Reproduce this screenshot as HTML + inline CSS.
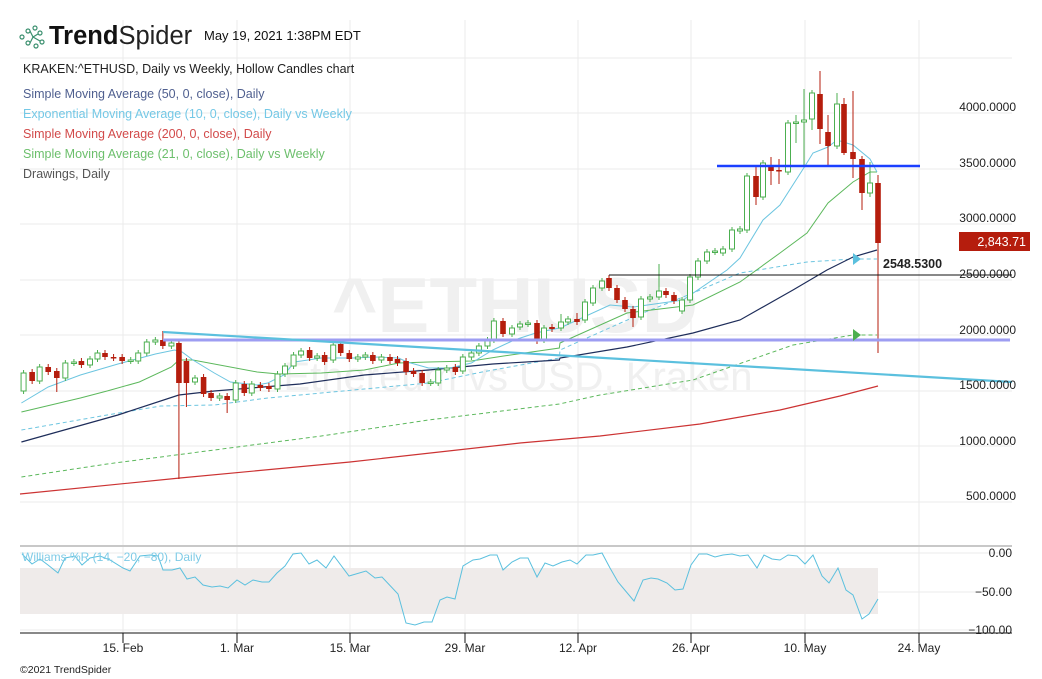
<!DOCTYPE html>
<html><head><meta charset="utf-8">
<style>
html,body{margin:0;padding:0;background:#fff;}
svg{display:block;font-family:"Liberation Sans",Arial,sans-serif;}
</style></head>
<body>
<svg id="s" width="1042" height="679" viewBox="0 0 1042 679" xmlns="http://www.w3.org/2000/svg">
<rect width="1042" height="679" fill="#fff"/>
<g id="grid" stroke="#ebebeb" stroke-width="1"></g>
<!-- watermark -->
<text x="515" y="332" font-size="78" font-weight="bold" fill="#f0f0f0" text-anchor="middle">^ETHUSD</text>
<text x="518" y="390" font-size="40" fill="#f0f0f0" text-anchor="middle">Ethereum vs USD, Kraken</text>
<!-- williams band -->
<rect x="20" y="568" width="858" height="46" fill="#efebea"/>
<g id="lines"></g>
<g id="candles"></g>
<g id="top"></g>

<!-- header -->
<g fill="none" stroke="#3a8f6e" stroke-width="1.2">
<circle cx="22" cy="37" r="2"/><circle cx="28" cy="31" r="2"/><circle cx="28" cy="43" r="2"/>
<circle cx="35" cy="28" r="2"/><circle cx="36" cy="46" r="2"/><circle cx="40" cy="33" r="2"/><circle cx="42" cy="42" r="2"/>
<path d="M30 31 L33 37 L30 43 M33 37 L38 34 M33 37 L40 41"/>
</g>
<text x="49" y="44" font-size="25.5" fill="#111"><tspan font-weight="bold">Trend</tspan><tspan fill="#222">Spider</tspan></text>
<text x="204" y="40" font-size="13" fill="#111">May 19, 2021 1:38PM EDT</text>
<text x="23" y="73" font-size="12.5" fill="#222">KRAKEN:^ETHUSD, Daily vs Weekly, Hollow Candles chart</text>
<text x="23" y="98" font-size="12.5" fill="#4f5f8f">Simple Moving Average (50, 0, close), Daily</text>
<text x="23" y="118" font-size="12.5" fill="#74c8e6">Exponential Moving Average (10, 0, close), Daily vs Weekly</text>
<text x="23" y="138" font-size="12.5" fill="#d24a4a">Simple Moving Average (200, 0, close), Daily</text>
<text x="23" y="158" font-size="12.5" fill="#6cbf6c">Simple Moving Average (21, 0, close), Daily vs Weekly</text>
<text x="23" y="178" font-size="12.5" fill="#555">Drawings, Daily</text>

<!-- axis labels -->
<g font-size="12" fill="#222" text-anchor="end">
<text x="1016" y="111">4000.0000</text>
<text x="1016" y="167">3500.0000</text>
<text x="1016" y="222">3000.0000</text>
<text x="1016" y="278">2500.0000</text>
<text x="1016" y="334">2000.0000</text>
<text x="1016" y="389">1500.0000</text>
<text x="1016" y="445">1000.0000</text>
<text x="1016" y="500">500.0000</text>
<text x="1012" y="557">0.00</text>
<text x="1012" y="596">−50.00</text>
<text x="1012" y="634">−100.00</text>
</g>
<rect x="959" y="232" width="71" height="19" fill="#b51d0d"/>
<text x="1026" y="246" font-size="12.5" fill="#fff" text-anchor="end">2,843.71</text>
<text x="883" y="268" font-size="12.5" font-weight="bold" fill="#222">2548.5300</text>
<text x="22" y="561" font-size="12" fill="#7fcbe6">Williams %R (14, −20, −80), Daily</text>
<g font-size="12" fill="#222" text-anchor="middle">
<text x="123" y="652">15. Feb</text><text x="237" y="652">1. Mar</text><text x="350" y="652">15. Mar</text>
<text x="465" y="652">29. Mar</text><text x="578" y="652">12. Apr</text><text x="691" y="652">26. Apr</text>
<text x="805" y="652">10. May</text><text x="919" y="652">24. May</text>
</g>
<text x="20" y="673" font-size="10.5" fill="#222">©2021 TrendSpider</text>
</svg>
<script>
var NS="http://www.w3.org/2000/svg";
function el(p,t,a){var e=document.createElementNS(NS,t);for(var k in a)e.setAttribute(k,a[k]);document.getElementById(p).appendChild(e);return e;}
var K=1.0714;
function sc(a){return a.map(function(p){return [p[0]*K,p[1]];});}
function path(p,pts,st){var d="M"+pts.map(function(q){return q[0].toFixed(1)+" "+q[1];}).join(" L");st.d=d;st.fill="none";el(p,"path",st);}
[123,237,350,465,578,691,805,919].forEach(function(x){el("grid","line",{x1:x,y1:20,x2:x,y2:633});});
[58,113,169,224,280,335,391,446,502,553,592,630].forEach(function(y){el("grid","line",{x1:20,y1:y,x2:1012,y2:y});});
el("top","line",{x1:20,y1:546,x2:1012,y2:546,stroke:"#c8c8c8","stroke-width":2});
el("top","line",{x1:20,y1:633,x2:1012,y2:633,stroke:"#111","stroke-width":1});
[123,237,350,465,578,691,805,919].forEach(function(x){el("top","line",{x1:x,y1:633,x2:x,y2:643,stroke:"#111"});});
path("lines",[[20,494],[180,478],[350,462],[520,443],[600,436],[700,424],[780,410],[840,396],[878,386]],{stroke:"#cc3333","stroke-width":1.2});
path("lines",sc([[20,477],[100,464],[200,450],[300,436],[400,420],[522,404]]).concat([[600,395],[693,380],[793,345],[853,335],[877,335]]),{stroke:"#5cb85c","stroke-width":1,"stroke-dasharray":"4 3"});
path("lines",sc([[20,430],[100,415],[150,406],[200,405],[250,398],[300,393],[400,383],[450,372],[522,358]]).concat([[560,350],[643,313],[693,293],[740,273],[807,262],[853,259],[877,259]]),{stroke:"#6cc5e0","stroke-width":1,"stroke-dasharray":"4 3"});
path("lines",sc([[20,442],[60,430],[110,415],[167,395],[200,391],[280,384],[340,375],[400,370],[460,364],[522,360]]).concat([[560,358],[627,347],[693,333],[740,320],[793,290],[827,270],[853,257],[877,250]]),{stroke:"#1e2d5a","stroke-width":1.2});
path("lines",sc([[20,412],[75,398],[100,391],[130,382],[160,367],[167,360],[180,360],[240,372],[260,374],[300,373],[340,370],[372,363],[400,362],[440,361],[470,356],[522,348]]).concat([[560,343],[627,313],[693,305],[740,282],[780,253],[807,233],[828,203],[853,182],[870,172],[877,172]]),{stroke:"#5cb85c","stroke-width":1});
path("lines",sc([[20,403],[45,387],[75,375],[110,364],[145,354],[163,350],[170,352],[180,360],[200,373],[215,382],[240,385],[250,383],[265,375],[275,362],[300,358],[330,358],[350,357],[372,358],[380,362],[400,368],[420,368],[440,363],[460,350],[480,340],[500,333],[522,328]]).concat([[560,328],[610,305],[633,307],[683,300],[727,270],[740,258],[763,220],[780,205],[805,166],[813,153],[828,147],[837,140],[853,145],[870,159],[877,172]]),{stroke:"#6cc5e0","stroke-width":1});
el("top","line",{x1:163,y1:340,x2:1010,y2:340,stroke:"#9d9df2","stroke-width":3});
el("top","line",{x1:163,y1:332,x2:1012,y2:382,stroke:"#5bc0de","stroke-width":2.2});
el("top","line",{x1:609,y1:275,x2:1012,y2:275,stroke:"#111","stroke-width":1});
el("top","line",{x1:717,y1:166,x2:920,y2:166,stroke:"#1a3fff","stroke-width":2.5});
el("top","path",{d:"M853 253 L861 259 L853 265Z",fill:"#5bc0de"});
el("top","path",{d:"M853 329 L861 335 L853 341Z",fill:"#4caf50"});
path("lines",[[22,554],[32,564],[40,559],[48,565],[58,573],[65,558],[75,556],[82,565],[90,558],[100,556],[110,560],[123,568],[130,571],[140,556],[150,555],[158,556],[163,570],[172,570],[180,568],[187,579],[195,577],[203,585],[212,587],[220,586],[228,588],[237,580],[245,585],[253,580],[262,582],[269,582],[277,573],[285,566],[293,554],[301,553],[309,564],[317,560],[326,568],[334,556],[349,576],[366,571],[375,578],[382,577],[398,594],[406,623],[415,625],[424,622],[432,622],[440,600],[447,597],[455,599],[463,566],[473,560],[480,559],[490,555],[497,555],[503,570],[512,562],[520,558],[528,558],[537,577],[545,563],[553,566],[562,562],[570,560],[577,564],[586,555],[593,555],[602,553],[610,568],[618,582],[634,601],[643,580],[651,578],[658,579],[667,583],[675,590],[683,589],[691,565],[699,554],[707,554],[715,557],[723,555],[732,554],[740,556],[748,555],[757,568],[764,555],[772,559],[780,560],[788,555],[797,556],[805,564],[813,555],[822,576],[829,583],[838,568],[846,590],[853,595],[862,619],[869,614],[878,599]],{stroke:"#5bc0de","stroke-width":1});
var A=[[22,373,391,'g'],[30,372,381,'r'],[37,367,381,'g'],[45,367,372,'r'],[53,371,378,'r',0,392],[61,363,378,'g'],[69,362,363,'g'],[76,361,365,'r'],[84,359,365,'g'],[91,353,359,'g'],[98,353,357,'r'],[106,357,358,'r'],[114,357,361,'r'],[122,360,361,'g'],[129,353,361,'g'],[137,342,353,'g'],[145,340,342,'g'],[152,340,346,'r',331],[160,343,346,'g'],[167,343,383,'r',340,479],[174,361,383,'r',0,407],[182,378,382,'g'],[190,377,394,'r'],[197,393,398,'r'],[205,396,398,'g'],[212,396,400,'r',0,413],[220,383,400,'g'],[228,384,393,'r'],[235,384,393,'g'],[243,385,388,'r'],[251,386,389,'r'],[259,374,389,'g'],[266,366,374,'g'],[274,355,366,'g'],[281,351,355,'g'],[289,350,358,'r'],[296,356,358,'g'],[303,355,362,'r'],[311,345,360,'g'],[318,344,353,'r'],[326,353,359,'r'],[334,357,359,'g'],[341,355,357,'g'],[348,355,361,'r'],[356,357,360,'g'],[364,357,361,'r'],[371,359,363,'r'],[379,361,372,'r'],[386,371,374,'r'],[394,373,383,'r'],[402,382,383,'g'],[409,370,383,'g'],[417,368,370,'g'],[425,367,372,'r'],[432,357,371,'g'],[440,353,357,'g'],[447,346,353,'g'],[455,340,346,'g'],[461,321,340,'g']];
A=A.map(function(c){var d=c.slice();d[0]=c[0]*K;return d;});
var B=[[503,321,334,'r'],[512,328,334,'g'],[520,324,327,'g'],[528,323,324,'g'],[537,323,341,'r'],[544,328,340,'g'],[552,327,329,'r'],[561,322,328,'g',314],[568,319,322,'g'],[577,319,322,'r',313],[585,302,320,'g'],[593,288,303,'g'],[602,281,288,'g'],[609,278,288,'r',275],[617,288,300,'r'],[625,300,309,'r'],[633,309,318,'r',0,327],[641,299,317,'g'],[650,297,299,'g'],[659,291,297,'g',264],[666,291,295,'r'],[674,295,301,'r'],[682,300,311,'g'],[690,277,300,'g'],[698,261,277,'g'],[707,252,261,'g'],[715,251,252,'g'],[723,249,253,'g'],[732,230,249,'g'],[740,229,231,'g'],[747,176,230,'g'],[756,176,197,'r',165,205],[763,163,197,'g'],[771,167,171,'r',157,185],[779,170,171,'r',159,184],[788,123,172,'g'],[796,122,123,'g',115,143],[804,120,122,'g',89,165],[812,93,119,'g',90,130],[820,94,129,'r',71,144],[828,132,146,'r',115,166],[837,104,146,'g',93],[844,104,153,'r',98,155],[853,152,159,'r',91,178],[862,159,193,'r',0,210],[870,183,193,'g',162,197],[878,183,243,'r',175,353]];
A.concat(B).forEach(function(c){
 var x=c[0],t=c[1],b=c[2],red=c[3]=='r',hi=c[4]||t-3,lo=c[5]||b+3;
 var col=red?"#b51d0d":"#4caf50";
 el("candles","line",{x1:x,y1:hi,x2:x,y2:lo,stroke:col,"stroke-width":1});
 var h=Math.max(b-t,1.5);
 if(red) el("candles","rect",{x:x-2.8,y:t,width:5.6,height:h,fill:col});
 else el("candles","rect",{x:x-2.5,y:t,width:5,height:h,fill:"#fff",stroke:col,"stroke-width":1});
});
</script>
</body></html>
